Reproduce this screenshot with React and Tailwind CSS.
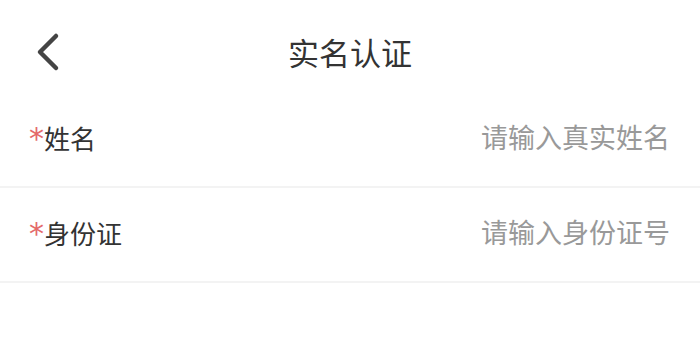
import React from "react";

const fields = [
  { label: "姓名", placeholder: "请输入真实姓名" },
  { label: "身份证", placeholder: "请输入身份证号" },
];

export default function App() {
  return (
    <div
      className="w-[700px] h-[364px] bg-white overflow-hidden"
      style={{ fontFamily: '"Noto Sans CJK SC", "Noto Sans", sans-serif' }}
    >
      <div className="relative h-[93px] flex items-start justify-center pt-[30px]">
        <button className="absolute left-[34px] top-[32px] w-[28px] h-[40px] flex items-center justify-center">
          <svg width="28" height="40" viewBox="0 0 28 40" fill="none">
            <path
              d="M22 4 L6 20 L22 36"
              stroke="#444"
              strokeWidth="4.5"
              strokeLinecap="round"
              strokeLinejoin="round"
            />
          </svg>
        </button>
        <h1 className="text-[31px] leading-[44px] text-[#333]">实名认证</h1>
      </div>

      {fields.map((f) => (
        <div
          key={f.label}
          className="h-[95px] flex items-center justify-between pl-[29px] pr-[30px] border-b-2 border-[#f3f3f3]"
        >
          <div className="flex items-center text-[26px] text-[#333] -mt-1">
            <span
              className="text-[#e46a6a] text-[30px] leading-none mt-[2px]"
              style={{ fontFamily: '"DejaVu Sans", sans-serif' }}
            >
              *
            </span>
            <span>{f.label}</span>
          </div>
          <input
            type="text"
            placeholder={f.placeholder}
            className="outline-none text-right text-[27px] w-[320px] placeholder:text-[#999] text-[#333] -mt-1"
          />
        </div>
      ))}
    </div>
  );
}
